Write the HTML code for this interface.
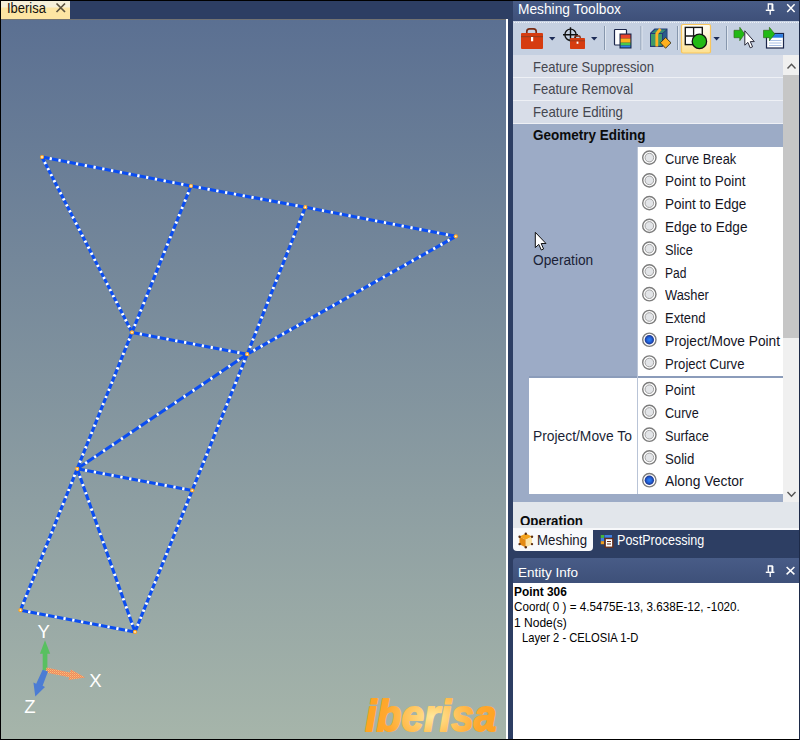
<!DOCTYPE html>
<html>
<head>
<meta charset="utf-8">
<title>Iberisa</title>
<style>
html,body{margin:0;padding:0;}
body{width:800px;height:740px;overflow:hidden;background:#2d3e63;font-family:"Liberation Sans",sans-serif;font-size:13.5px;color:#1a1a1a;position:relative;}
.abs{position:absolute;}
.t{position:absolute;white-space:pre;line-height:20px;transform-origin:0 50%;}
#frame-top{left:0;top:0;width:800px;height:1px;background:#000;}
#frame-left{left:0;top:0;width:1px;height:740px;background:#000;}
#frame-bottom{left:0;top:738.6px;width:800px;height:1.4px;background:#000;}
#frame-right{left:799px;top:0;width:1px;height:740px;background:#1d2a48;}
#doc-tab{left:1px;top:1px;width:69px;height:18px;background:linear-gradient(#f6f0da 0,#f6f0da 6px,#fde5a3 7px,#fde5a3 100%);}
#doc-tab span{position:absolute;left:6px;top:0px;font-size:13px;line-height:17px;color:#111;}
#viewport{left:1px;top:19px;width:505.4px;height:720px;background:linear-gradient(#5b7092,#a6b5aa);border-top:1.6px solid #727272;box-sizing:border-box;}
#vp-right{left:506px;top:19px;width:2px;height:720px;background:#fff;}
#vp-svg{left:0;top:0;}
.mb{stroke:#0b4df0;stroke-width:3.1;stroke-linecap:butt;}
.mw{stroke:#fff;stroke-width:2.9;}
.ptitle{background:linear-gradient(#485c87,#3e5079);color:#fff;}
.ptitle span{position:absolute;left:5px;top:0;white-space:nowrap;}
#mt-title{left:513px;top:1px;width:286px;height:20px;}
#mt-title span{font-size:13.76px;line-height:19px;}
#toolbar{left:513px;top:21px;width:286px;height:33.8px;background:#c5d0e1;}
#tb-dots{left:514px;top:22px;width:285px;height:0;border-top:1px dotted #eef2f8;}
#list{left:513px;top:55px;width:270px;height:447px;background:#9cabc6;overflow:hidden;}
.rowbg{position:absolute;left:0;width:270px;background:#d8dde8;}
.rowsep{position:absolute;left:0;width:270px;height:1px;background:#eef0f5;}

#w1{left:124.5px;top:91.7px;width:146px;height:230px;background:#fff;}
#w2{left:16px;top:322.8px;width:254px;height:116px;background:#fff;}
#sep{left:16px;top:321.2px;width:254px;height:1.6px;background:#8b9cba;}
#vline{left:124px;top:91.7px;width:1px;height:347px;background:#b9c4d7;}
#below{left:513px;top:502px;width:286px;height:25.5px;background:#e2e6eb;overflow:hidden;}
#below span{position:absolute;left:7px;top:10px;font-size:13.34px;font-weight:bold;color:#0b0b0b;line-height:16px;}
#below-line{left:513px;top:527.5px;width:286px;height:2.3px;background:#f7f8fa;}
#scroll{left:783px;top:55px;width:16px;height:450px;background:#f0f0f0;}
#thumb{left:783px;top:75px;width:16px;height:263px;background:#c6c6c6;}
.lbl{position:absolute;white-space:nowrap;line-height:16px;color:#1a1f36;}
.opt{position:absolute;line-height:16px;white-space:nowrap;color:#15151f;}
.radio{position:absolute;width:11.8px;height:11.8px;border-radius:50%;border:1.5px solid #7c7c7c;background:radial-gradient(circle,#e4e6e9 0,#e2e4e7 3.9px,#9c9c9c 4.6px,#fff 5.3px,#fff 100%);box-sizing:content-box;}
.radio.on{background:radial-gradient(circle,#2f80f4 0,#2468e0 2px,#1d46ac 3.6px,#24388a 4.6px,#fff 5.3px,#fff 100%);}
#tab-mesh{left:513px;top:529px;width:80px;height:22px;background:#f8f9fb;border-radius:0 0 4px 4px;}
#tab-mesh span{position:absolute;left:24px;top:2px;font-size:13.25px;line-height:18px;color:#15151f;}
#tab-post{left:593px;top:530px;width:120px;height:22px;}
#tab-post span{position:absolute;left:24px;top:1px;font-size:12.57px;line-height:18px;color:#fff;white-space:nowrap;}
#ei-title{left:513px;top:558px;width:286px;height:25px;border-radius:3px 0 0 0;}
#ei-title span{font-size:13.49px;line-height:26px;}
#ei-body{left:513px;top:583px;width:286px;height:156px;background:#fff;color:#000;}
#ei-body div{position:absolute;white-space:pre;line-height:16px;}
</style>
</head>
<body>
<div id="doc-tab" class="abs">
<svg class="abs" style="left:54px;top:0.7px" width="12" height="12" viewBox="0 0 12 12"><path d="M1.5 1.5 L10 10 M10 1.5 L1.5 10" stroke="#5d533f" stroke-width="1.7" fill="none"/></svg>
</div>
<div id="viewport" class="abs"></div>
<div id="vp-right" class="abs"></div>

<svg id="vp-svg" class="abs" width="508" height="740" viewBox="0 0 508 740">
<defs>
<radialGradient id="lg" gradientUnits="userSpaceOnUse" cx="66" cy="-13" r="62" gradientTransform="translate(66,-13) scale(1,0.6) translate(-66,13)">
<stop offset="0" stop-color="#ffe89a"/><stop offset="0.35" stop-color="#ffc863"/><stop offset="0.75" stop-color="#ffa82e"/><stop offset="1" stop-color="#ffa424"/>
</radialGradient>
<pattern id="xp" width="2" height="2" patternUnits="userSpaceOnUse"><rect width="2" height="2" fill="#f0875f"/><rect width="1" height="1" fill="#f7c277"/><rect x="1" y="1" width="1" height="1" fill="#f4a56a"/></pattern>
</defs>
<line x1="42" y1="157" x2="191" y2="186" class="mb"/>
<line x1="191" y1="186" x2="305.3" y2="207.2" class="mb"/>
<line x1="305.3" y1="207.2" x2="455.8" y2="236.3" class="mb"/>
<line x1="42" y1="157" x2="132" y2="332.4" class="mb"/>
<line x1="191" y1="186" x2="132" y2="332.4" class="mb"/>
<line x1="132" y1="332.4" x2="77.2" y2="468.8" class="mb"/>
<line x1="77.2" y1="468.8" x2="20.5" y2="610.2" class="mb"/>
<line x1="305.3" y1="207.2" x2="247.2" y2="354.2" class="mb"/>
<line x1="247.2" y1="354.2" x2="192.2" y2="490.4" class="mb"/>
<line x1="192.2" y1="490.4" x2="135" y2="631.9" class="mb"/>
<line x1="455.8" y1="236.3" x2="247.2" y2="354.2" class="mb"/>
<line x1="247.2" y1="354.2" x2="77.2" y2="468.8" class="mb"/>
<line x1="132" y1="332.4" x2="247.2" y2="354.2" class="mb"/>
<line x1="77.2" y1="468.8" x2="192.2" y2="490.4" class="mb"/>
<line x1="20.5" y1="610.2" x2="135" y2="631.9" class="mb"/>
<line x1="77.2" y1="468.8" x2="135" y2="631.9" class="mb"/>
<line x1="42" y1="157" x2="191" y2="186" class="mw" stroke-dasharray="2.3 6.629" stroke-dashoffset="1.15"/>
<line x1="191" y1="186" x2="305.3" y2="207.2" class="mw" stroke-dasharray="2.3 6.642" stroke-dashoffset="1.15"/>
<line x1="305.3" y1="207.2" x2="455.8" y2="236.3" class="mw" stroke-dasharray="2.3 6.717" stroke-dashoffset="1.15"/>
<line x1="42" y1="157" x2="132" y2="332.4" class="mw" stroke-dasharray="2.3 4.498" stroke-dashoffset="1.15"/>
<line x1="191" y1="186" x2="132" y2="332.4" class="mw" stroke-dasharray="2.3 5.592" stroke-dashoffset="1.15"/>
<line x1="132" y1="332.4" x2="77.2" y2="468.8" class="mw" stroke-dasharray="2.3 5.437" stroke-dashoffset="1.15"/>
<line x1="77.2" y1="468.8" x2="20.5" y2="610.2" class="mw" stroke-dasharray="2.3 5.317" stroke-dashoffset="1.15"/>
<line x1="305.3" y1="207.2" x2="247.2" y2="354.2" class="mw" stroke-dasharray="2.3 5.603" stroke-dashoffset="1.15"/>
<line x1="247.2" y1="354.2" x2="192.2" y2="490.4" class="mw" stroke-dasharray="2.3 5.431" stroke-dashoffset="1.15"/>
<line x1="192.2" y1="490.4" x2="135" y2="631.9" class="mw" stroke-dasharray="2.3 5.331" stroke-dashoffset="1.15"/>
<line x1="455.8" y1="236.3" x2="247.2" y2="354.2" class="mw" stroke-dasharray="2.3 5.963" stroke-dashoffset="1.15"/>
<line x1="247.2" y1="354.2" x2="77.2" y2="468.8" class="mw" stroke-dasharray="2.3 8.491" stroke-dashoffset="1.15"/>
<line x1="132" y1="332.4" x2="247.2" y2="354.2" class="mw" stroke-dasharray="2.3 6.719" stroke-dashoffset="1.15"/>
<line x1="77.2" y1="468.8" x2="192.2" y2="490.4" class="mw" stroke-dasharray="2.3 6.701" stroke-dashoffset="1.15"/>
<line x1="20.5" y1="610.2" x2="135" y2="631.9" class="mw" stroke-dasharray="2.3 6.664" stroke-dashoffset="1.15"/>
<line x1="77.2" y1="468.8" x2="135" y2="631.9" class="mw" stroke-dasharray="2.3 6.352" stroke-dashoffset="1.15"/>
<circle cx="42" cy="157" r="2.1" fill="#ffa51e"/><circle cx="42" cy="157" r="0.9" fill="#fff6dc"/>
<circle cx="191" cy="186" r="2.1" fill="#ffa51e"/><circle cx="191" cy="186" r="0.9" fill="#fff6dc"/>
<circle cx="305.3" cy="207.2" r="2.1" fill="#ffa51e"/><circle cx="305.3" cy="207.2" r="0.9" fill="#fff6dc"/>
<circle cx="455.8" cy="236.3" r="2.1" fill="#ffa51e"/><circle cx="455.8" cy="236.3" r="0.9" fill="#fff6dc"/>
<circle cx="132" cy="332.4" r="2.1" fill="#ffa51e"/><circle cx="132" cy="332.4" r="0.9" fill="#fff6dc"/>
<circle cx="247.2" cy="354.2" r="2.1" fill="#ffa51e"/><circle cx="247.2" cy="354.2" r="0.9" fill="#fff6dc"/>
<circle cx="77.2" cy="468.8" r="2.1" fill="#ffa51e"/><circle cx="77.2" cy="468.8" r="0.9" fill="#fff6dc"/>
<circle cx="192.2" cy="490.4" r="2.1" fill="#ffa51e"/><circle cx="192.2" cy="490.4" r="0.9" fill="#fff6dc"/>
<circle cx="20.5" cy="610.2" r="2.1" fill="#ffa51e"/><circle cx="20.5" cy="610.2" r="0.9" fill="#fff6dc"/>
<circle cx="135" cy="631.9" r="2.1" fill="#ffa51e"/><circle cx="135" cy="631.9" r="0.9" fill="#fff6dc"/>

<g id="triad">
<polygon points="45,640.3 50.2,653.8 47.4,653.8 47.4,670.5 42.7,670.5 42.7,653.8 39.9,653.8" fill="#58c060"/>
<polygon points="46.5,667.6 70,672.4 70.8,669.6 85.3,677.4 68.6,680 69.2,677.3 45.7,672.6" fill="url(#xp)"/>
<polygon points="42.6,669.8 48,671.6 42.6,685.8 45,687 35.3,696.4 33.4,682.6 36.2,683.7" fill="#4c7cd4"/>
<text x="43.7" y="638.4" font-size="18.5" fill="#fff" text-anchor="middle" font-family="Liberation Sans, sans-serif">Y</text>
<text x="95.3" y="687" font-size="18.5" fill="#fff" text-anchor="middle" font-family="Liberation Sans, sans-serif">X</text>
<text x="29.9" y="713" font-size="18.5" fill="#fff" text-anchor="middle" font-family="Liberation Sans, sans-serif">Z</text>
</g>


<text transform="translate(365.3,731.3) scale(1.017,1.125)" font-size="40" font-weight="bold" font-style="italic" fill="url(#lg)" stroke="url(#lg)" stroke-width="1.7" stroke-linejoin="round" font-family="Liberation Sans, sans-serif">iberisa</text>

</svg>

<div id="mt-title" class="abs ptitle"></div>
<div id="toolbar" class="abs"></div><div id="tb-dots" class="abs"></div>

<div id="list" class="abs">
<div class="rowbg" style="top:0;height:68.7px"></div>
<div class="rowsep" style="top:22.4px"></div>
<div class="rowsep" style="top:45.0px"></div>
<div class="rowsep" style="top:67.7px"></div>
<div class="t" style="left:20.20px;top:2px;font-size:14.10px;color:#44464f;transform:scaleX(0.9241);">Feature Suppression</div>
<div class="t" style="left:20.20px;top:24px;font-size:14.10px;color:#44464f;transform:scaleX(0.9255);">Feature Removal</div>
<div class="t" style="left:20.20px;top:47px;font-size:14.10px;color:#44464f;transform:scaleX(0.9411);">Feature Editing</div>
<div class="t" style="left:20.20px;top:70px;font-size:14.10px;font-weight:bold;color:#0b0b0b;transform:scaleX(0.9574);">Geometry Editing</div>
  <div id="w1" class="abs"></div>
  <div id="sep" class="abs"></div>
  <div id="w2" class="abs"></div>
  <div id="vline" class="abs"></div>
<div class="t" style="left:20.20px;top:195px;font-size:14.39px;color:#1a1f36;transform:scaleX(0.9534);">Operation</div>
<div class="t" style="left:20.40px;top:371px;font-size:14.39px;color:#1a1f36;transform:scaleX(0.9618);">Project/Move To</div>
<svg class="abs" style="left:0;top:0" width="270" height="447" viewBox="0 0 270 447"><defs><radialGradient id="ron"><stop offset="0" stop-color="#2f84f6"/><stop offset="0.45" stop-color="#2468e0"/><stop offset="0.8" stop-color="#1d46ac"/><stop offset="1" stop-color="#26398c"/></radialGradient></defs><circle cx="136.35" cy="102.60" r="6.65" fill="#fff" stroke="#7c7c7c" stroke-width="1.4"/><circle cx="136.35" cy="102.60" r="4.3" fill="#e3e5e8" stroke="#9a9a9a" stroke-width="0.9"/><circle cx="136.35" cy="125.37" r="6.65" fill="#fff" stroke="#7c7c7c" stroke-width="1.4"/><circle cx="136.35" cy="125.37" r="4.3" fill="#e3e5e8" stroke="#9a9a9a" stroke-width="0.9"/><circle cx="136.35" cy="148.14" r="6.65" fill="#fff" stroke="#7c7c7c" stroke-width="1.4"/><circle cx="136.35" cy="148.14" r="4.3" fill="#e3e5e8" stroke="#9a9a9a" stroke-width="0.9"/><circle cx="136.35" cy="170.91" r="6.65" fill="#fff" stroke="#7c7c7c" stroke-width="1.4"/><circle cx="136.35" cy="170.91" r="4.3" fill="#e3e5e8" stroke="#9a9a9a" stroke-width="0.9"/><circle cx="136.35" cy="193.68" r="6.65" fill="#fff" stroke="#7c7c7c" stroke-width="1.4"/><circle cx="136.35" cy="193.68" r="4.3" fill="#e3e5e8" stroke="#9a9a9a" stroke-width="0.9"/><circle cx="136.35" cy="216.45" r="6.65" fill="#fff" stroke="#7c7c7c" stroke-width="1.4"/><circle cx="136.35" cy="216.45" r="4.3" fill="#e3e5e8" stroke="#9a9a9a" stroke-width="0.9"/><circle cx="136.35" cy="239.22" r="6.65" fill="#fff" stroke="#7c7c7c" stroke-width="1.4"/><circle cx="136.35" cy="239.22" r="4.3" fill="#e3e5e8" stroke="#9a9a9a" stroke-width="0.9"/><circle cx="136.35" cy="261.99" r="6.65" fill="#fff" stroke="#7c7c7c" stroke-width="1.4"/><circle cx="136.35" cy="261.99" r="4.3" fill="#e3e5e8" stroke="#9a9a9a" stroke-width="0.9"/><circle cx="136.35" cy="284.76" r="6.65" fill="#fff" stroke="#7c7c7c" stroke-width="1.4"/><circle cx="136.35" cy="284.76" r="4.7" fill="url(#ron)"/><circle cx="136.35" cy="307.53" r="6.65" fill="#fff" stroke="#7c7c7c" stroke-width="1.4"/><circle cx="136.35" cy="307.53" r="4.3" fill="#e3e5e8" stroke="#9a9a9a" stroke-width="0.9"/><circle cx="136.35" cy="334.20" r="6.65" fill="#fff" stroke="#7c7c7c" stroke-width="1.4"/><circle cx="136.35" cy="334.20" r="4.3" fill="#e3e5e8" stroke="#9a9a9a" stroke-width="0.9"/><circle cx="136.35" cy="356.95" r="6.65" fill="#fff" stroke="#7c7c7c" stroke-width="1.4"/><circle cx="136.35" cy="356.95" r="4.3" fill="#e3e5e8" stroke="#9a9a9a" stroke-width="0.9"/><circle cx="136.35" cy="379.70" r="6.65" fill="#fff" stroke="#7c7c7c" stroke-width="1.4"/><circle cx="136.35" cy="379.70" r="4.3" fill="#e3e5e8" stroke="#9a9a9a" stroke-width="0.9"/><circle cx="136.35" cy="402.45" r="6.65" fill="#fff" stroke="#7c7c7c" stroke-width="1.4"/><circle cx="136.35" cy="402.45" r="4.3" fill="#e3e5e8" stroke="#9a9a9a" stroke-width="0.9"/><circle cx="136.35" cy="425.20" r="6.65" fill="#fff" stroke="#7c7c7c" stroke-width="1.4"/><circle cx="136.35" cy="425.20" r="4.7" fill="url(#ron)"/></svg>
<div class="t" style="left:152.20px;top:94px;font-size:13.88px;color:#15151f;transform:scaleX(0.9229);">Curve Break</div>
<div class="t" style="left:152.20px;top:116px;font-size:13.88px;color:#15151f;transform:scaleX(0.9762);">Point to Point</div>
<div class="t" style="left:152.20px;top:139px;font-size:13.88px;color:#15151f;transform:scaleX(0.9755);">Point to Edge</div>
<div class="t" style="left:152.20px;top:162px;font-size:13.88px;color:#15151f;transform:scaleX(0.9805);">Edge to Edge</div>
<div class="t" style="left:152.20px;top:185px;font-size:13.88px;color:#15151f;transform:scaleX(0.9244);">Slice</div>
<div class="t" style="left:152.20px;top:208px;font-size:13.88px;color:#15151f;transform:scaleX(0.8667);">Pad</div>
<div class="t" style="left:152.20px;top:230px;font-size:13.88px;color:#15151f;transform:scaleX(0.9280);">Washer</div>
<div class="t" style="left:152.20px;top:253px;font-size:13.88px;color:#15151f;transform:scaleX(0.9373);">Extend</div>
<div class="t" style="left:152.20px;top:276px;font-size:13.88px;color:#15151f;transform:scaleX(0.9878);">Project/Move Point</div>
<div class="t" style="left:152.20px;top:299px;font-size:13.88px;color:#15151f;transform:scaleX(0.9452);">Project Curve</div>
<div class="t" style="left:152.20px;top:325px;font-size:13.88px;color:#15151f;transform:scaleX(0.9481);">Point</div>
<div class="t" style="left:152.20px;top:348px;font-size:13.88px;color:#15151f;transform:scaleX(0.9099);">Curve</div>
<div class="t" style="left:152.20px;top:371px;font-size:13.88px;color:#15151f;transform:scaleX(0.9179);">Surface</div>
<div class="t" style="left:152.20px;top:394px;font-size:13.88px;color:#15151f;transform:scaleX(0.9524);">Solid</div>
<div class="t" style="left:152.20px;top:416px;font-size:13.88px;color:#15151f;transform:scaleX(0.9986);">Along Vector</div>
</div>
<div id="scroll" class="abs"></div>
<div id="thumb" class="abs"></div>
<svg class="abs" style="left:783px;top:55px" width="16" height="450" viewBox="0 0 16 450">
<path d="M4.5 13.5 L8.5 9.2 L12.5 13.5" stroke="#555" stroke-width="1.4" fill="none"/>
<path d="M4.5 437 L8.5 441.3 L12.5 437" stroke="#555" stroke-width="1.4" fill="none"/>
</svg>
<div id="below" class="abs"></div>
<div id="below-line" class="abs"></div>

<div id="tab-mesh" class="abs"></div>
<!--TABICONS-->

<div id="ei-title" class="abs ptitle"></div>
<div id="ei-body" class="abs"></div>
<div class="t" style="left:6.80px;top:-2px;font-size:14.53px;color:#111;transform:scaleX(0.8940);">Iberisa</div>
<div class="t" style="left:518.10px;top:-1px;font-size:14.17px;color:#fff;transform:scaleX(0.9711);">Meshing Toolbox</div>
<div class="t" style="left:520.20px;top:511px;font-size:14.39px;font-weight:bold;color:#0b0b0b;transform:scaleX(0.9270);clip-path:inset(0 0 6px 0);">Operation</div>
<div class="t" style="left:537.00px;top:530px;font-size:14.24px;color:#15151f;transform:scaleX(0.9305);">Meshing</div>
<div class="t" style="left:617.00px;top:530px;font-size:14.24px;color:#fff;transform:scaleX(0.8827);">PostProcessing</div>
<div class="t" style="left:517.80px;top:563px;font-size:13.52px;color:#fff;transform:scaleX(0.9978);">Entity Info</div>
<div class="t" style="left:514.20px;top:582px;font-size:12.06px;font-weight:bold;color:#000;transform:scaleX(0.9867);">Point 306</div>
<div class="t" style="left:514.20px;top:597px;font-size:11.92px;color:#000;transform:scaleX(0.9790);">Coord( 0 ) = 4.5475E-13, 3.638E-12, -1020.</div>
<div class="t" style="left:514.20px;top:613px;font-size:11.92px;color:#000;transform:scaleX(1.0109);">1 Node(s)</div>
<div class="t" style="left:521.50px;top:628px;font-size:11.92px;color:#000;transform:scaleX(0.9396);">Layer 2 - CELOSIA 1-D</div>

<svg id="ui-svg" class="abs" style="left:0;top:0" width="800" height="740" viewBox="0 0 800 740">
<defs>
<linearGradient id="hl" x1="0" y1="0" x2="0" y2="1"><stop offset="0" stop-color="#fffdf2"/><stop offset="0.45" stop-color="#fdf2d2"/><stop offset="1" stop-color="#fde08e"/></linearGradient>
</defs>
<!-- toolbox 1 -->
<path d="M526.8 33.5 V31.5 Q526.8 28.8 529.5 28.8 H533.5 Q536.2 28.8 536.2 31.5 V33.5" fill="none" stroke="#7a2c14" stroke-width="1.7"/>
<rect x="521" y="33" width="22" height="16" rx="1" fill="#d63c10"/>
<rect x="521" y="36" width="22" height="1.2" fill="#9c3a1c"/>
<rect x="531" y="37" width="2.2" height="4.3" fill="#fff"/>
<polygon points="549,37 555.4,37 552.2,40.4" fill="#1c2b57"/>
<!-- crosshair + toolbox 2 -->
<circle cx="570.5" cy="34.7" r="5.6" fill="none" stroke="#111" stroke-width="1.4"/>
<path d="M563 34.7 H578 M570.5 27.3 V42" stroke="#111" stroke-width="1.4"/>
<path d="M574.8 38.5 V37.3 Q574.8 36 576 36 H579 Q580.2 36 580.2 37.3 V38.5" fill="none" stroke="#7a2c14" stroke-width="1.3"/>
<rect x="570" y="38" width="15" height="11" rx="0.8" fill="#d63c10"/>
<rect x="570" y="40.3" width="15" height="1" fill="#9c3a1c"/>
<rect x="576.6" y="41.6" width="1.8" height="2.2" fill="#fff"/>
<polygon points="591,37 597.4,37 594.2,40.4" fill="#1c2b57"/>
<!-- separators -->
<g fill="#8797ad"><rect x="604" y="26" width="1" height="24"/><rect x="640.5" y="26" width="1" height="24"/><rect x="677" y="26" width="1" height="24"/><rect x="726" y="26" width="1" height="24"/></g>
<g fill="#dfe6f0"><rect x="605" y="26" width="1" height="24"/><rect x="641.5" y="26" width="1" height="24"/><rect x="678" y="26" width="1" height="24"/><rect x="727" y="26" width="1" height="24"/></g>
<!-- copy -->
<rect x="614.5" y="29.5" width="12" height="15.5" rx="0.8" fill="#fff" stroke="#1b264a" stroke-width="1.2"/>
<rect x="619.5" y="33.5" width="12" height="15" fill="#1b264a"/>
<rect x="620.6" y="34.6" width="9.8" height="3.9" fill="#e8452c"/>
<rect x="620.6" y="38.5" width="9.8" height="4.2" fill="#ffb21a"/>
<rect x="620.6" y="42.7" width="9.8" height="2.8" fill="#48c84a"/>
<rect x="620.6" y="45.5" width="9.8" height="1.9" fill="#2f80e4"/>
<!-- gift cube -->
<polygon points="650,33 654.5,28.6 667.5,28.6 667.5,42 662.5,46.9 650,46.9" fill="#23397a"/>
<polygon points="651,34 662,34 662,45.8 651,45.8" fill="#3f9a68"/>
<polygon points="651.5,33 655.5,29.4 666.5,29.4 662.5,33" fill="#348a76"/>
<polygon points="663,33.6 666.7,30.3 666.7,41.6 663,45.4" fill="#2a5c8a"/>
<path d="M656.8 46.5 V33.5 L660.5 29" stroke="#ffb423" stroke-width="2.8" fill="none"/>
<polygon points="665.6,37.5 671,42.8 665.6,48.2 660.3,42.8" fill="#ffb01e" stroke="#33301e" stroke-width="0.9"/>
<!-- highlighted button -->
<rect x="681.5" y="24.5" width="29" height="28.5" rx="1.5" fill="url(#hl)" stroke="#f9c65c" stroke-width="1.2"/>
<rect x="685.3" y="27.4" width="17" height="17.2" fill="#fff" stroke="#151515" stroke-width="1.4"/>
<path d="M693.6 27.4 V44.6 M685.3 36 H702.3" stroke="#151515" stroke-width="1.3"/>
<circle cx="699.4" cy="41.4" r="7.2" fill="#22b915" stroke="#111" stroke-width="1.3"/>
<polygon points="713.4,37 719.8,37 716.6,40.4" fill="#1c2b57"/>
<!-- arrow + cursor -->
<polygon points="734,30.3 739.8,30.3 739.8,27.3 744.6,34 739.8,40.7 739.8,37.7 734,37.7" fill="#22b915" stroke="#356b1e" stroke-width="0.7"/>
<polygon points="744.8,30.8 744.8,45.2 747.9,42.4 750.2,47.8 752.6,46.8 750.3,41.6 754.3,41.6" fill="#fff" stroke="#2b2b3a" stroke-width="1"/>
<!-- arrow + table -->
<rect x="766.5" y="33.5" width="17" height="14.5" fill="#fff" stroke="#1b264a" stroke-width="1.2"/>
<rect x="767.1" y="34.1" width="15.8" height="3.6" fill="#2a7be0"/>
<path d="M769 40.5 H781.5 M769 43 H781.5 M769 45.5 H781.5" stroke="#a9c0e6" stroke-width="1"/>
<polygon points="763.5,30.3 769.4,30.3 769.4,27.3 774.8,34 769.4,40.7 769.4,37.7 763.5,37.7" fill="#22b915" stroke="#356b1e" stroke-width="0.7"/>
<!-- title pins -->
<g stroke="#fff" fill="none">
<path d="M768.3 9.8 V4 H772.2 V9.8" stroke-width="1.3"/><path d="M772.6 4 V9.8" stroke-width="1.6"/><path d="M765.8 10.3 H774.4" stroke-width="1.4"/><path d="M770.2 10.5 V14.8" stroke-width="1.3"/>
<path d="M787.2 4.3 L794.6 11.9 M794.6 4.3 L787.2 11.9" stroke-width="1.5"/>
<path d="M768.3 571.8 V566 H772.2 V571.8" stroke-width="1.3"/><path d="M772.6 566 V571.8" stroke-width="1.6"/><path d="M765.8 572.3 H774.4" stroke-width="1.4"/><path d="M770.2 572.5 V576.9" stroke-width="1.3"/>
<path d="M786.6 567 L794.4 574.4 M794.4 567 L786.6 574.4" stroke-width="1.5"/>
</g>
<!-- tab icons -->
<g>
<polygon points="525.8,533.6 532,536.6 525.8,539.8 519.5,536.6" fill="#f3a21c"/>
<polygon points="519.5,536.6 525.8,539.8 525.8,547.4 519.5,544.2" fill="#e38a14"/>
<polygon points="532,536.6 525.8,539.8 525.8,547.4 532,544.2" fill="#fbe2a4"/>
<g fill="#5a2e12"><circle cx="525.8" cy="533.8" r="1.2"/><circle cx="519.6" cy="536.7" r="1.2"/><circle cx="532" cy="536.7" r="1.2"/><circle cx="519.6" cy="544.1" r="1.2"/><circle cx="532" cy="544.1" r="1.2"/><circle cx="525.8" cy="547.2" r="1.2"/></g>
</g>
<g>
<rect x="600.8" y="535" width="3.2" height="3" fill="#46b43c"/><rect x="600.8" y="538" width="3.2" height="3.2" fill="#3f7fe0"/><rect x="600.8" y="541.2" width="3.2" height="3" fill="#f0a020"/>
<rect x="604.5" y="535" width="7.5" height="2.6" fill="#3f7fe0"/>
<rect x="605.2" y="538.6" width="7.6" height="8.6" fill="#fff" stroke="#6a2c14" stroke-width="1.3"/>
<path d="M607 541.5 H611 M607 544 H611" stroke="#6a2c14" stroke-width="1.1"/>
</g>
<!-- mouse cursor -->
<polygon points="535.3,232.3 535.3,247.6 538.8,244.4 541.3,250 543.6,249 541.2,243.5 546,243.5" fill="#fff" stroke="#111" stroke-width="1"/>
</svg>

<!--CURSOR-->

<div id="frame-top" class="abs"></div>
<div id="frame-left" class="abs"></div>
<div id="frame-bottom" class="abs"></div>
<div id="frame-right" class="abs"></div>
</body>
</html>
